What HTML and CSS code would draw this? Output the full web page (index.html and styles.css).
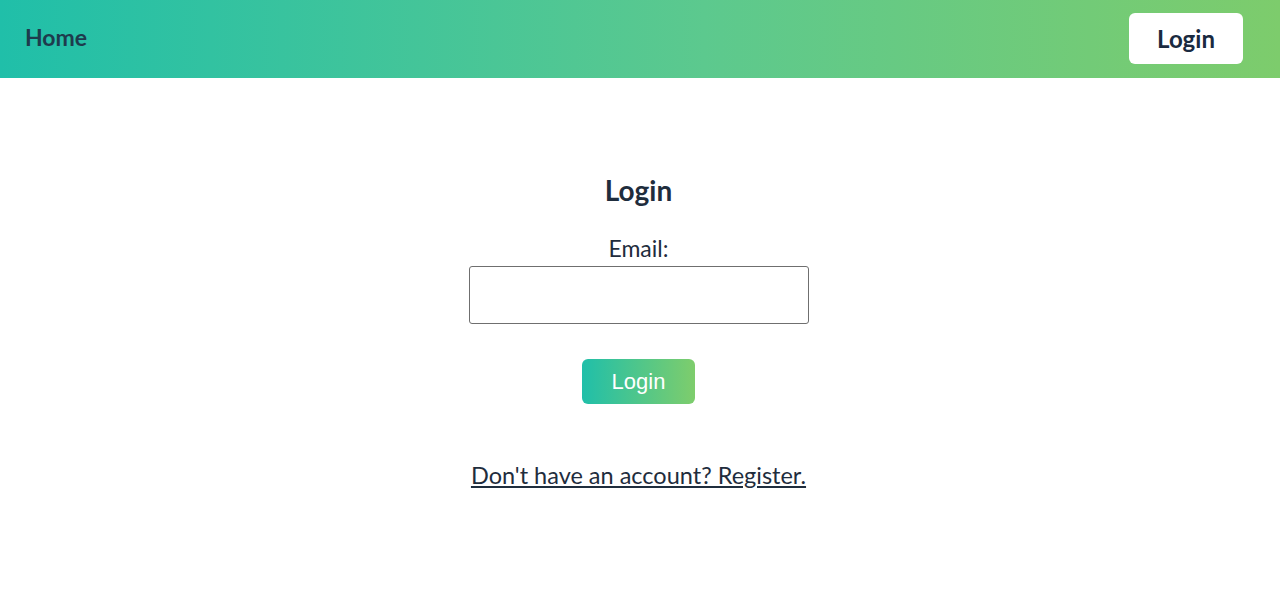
FILE: index.html
```html
<!DOCTYPE html>
<html lang="en">
<head>
  <meta charset="UTF-8">
  <meta name="viewport" content="width=device-width, initial-scale=1.0">
  <title>Login</title>
  <link rel="stylesheet" href="styles.css">
</head>
<body>
  <nav class="navbar">
    <a href="#" class="nav-home">Home</a>
    <a href="#" class="nav-login">Login</a>
  </nav>

  <div class="container">
    <h2 class="title">Login</h2>
    <form class="login-form">
      <label for="email">Email:</label>
      <input type="email" id="email" name="email">
      <button type="submit" class="button">Login</button>
    </form>
    <a href="#" class="register-link">Don't have an account? Register.</a>
  </div>
</body>
</html>
```

FILE: styles.css
```css
body {
  font-family: 'Lato', 'Open Sans', sans-serif;
  color: #1f2d3d;
  margin: 0;
  background-color: #ffffff;
}
.navbar {
  height: 78px;
  display: flex;
  align-items: center;
  justify-content: space-between;
  padding: 0 37px 0 25px;
  background: linear-gradient(90deg, #20bfa9 0%, #5cc98e 55%, #7dcc6c 100%);
}
.nav-home {
  font-size: 23px;
  font-weight: 700;
  color: #1e3b4d;
  text-decoration: none;
  margin-bottom: 4px;
}
.nav-login {
  background-color: #ffffff;
  color: #1a2a40;
  font-size: 24px;
  font-weight: 700;
  text-decoration: none;
  width: 114px;
  height: 51px;
  margin-top: -1px;
  display: flex;
  align-items: center;
  justify-content: center;
  border-radius: 6px;
}
.container {
  display: flex;
  flex-direction: column;
  align-items: center;
  padding-top: 95px;
  padding-right: 3px;
}
.title {
  font-size: 28px;
  font-weight: 700;
  margin: 0 0 27px 0;
}
.login-form {
  display: flex;
  flex-direction: column;
  align-items: center;
}
.login-form label {
  font-size: 23px;
  margin-bottom: 4px;
}
.login-form input {
  width: 340px;
  height: 58px;
  box-sizing: border-box;
  border: 1px solid #6f6f6f;
  border-radius: 3px;
  margin: 0;
}
.button {
  margin-top: 35px;
  width: 113px;
  height: 45px;
  border: none;
  border-radius: 6px;
  background: linear-gradient(90deg, #20bfa9 0%, #7ecd6c 100%);
  color: #ffffff;
  font-family: 'Liberation Sans', Arial, sans-serif;
  font-size: 22px;
  cursor: pointer;
}
.register-link {
  margin-top: 57px;
  font-size: 23.5px;
  color: #1f2d3d;
}
```
